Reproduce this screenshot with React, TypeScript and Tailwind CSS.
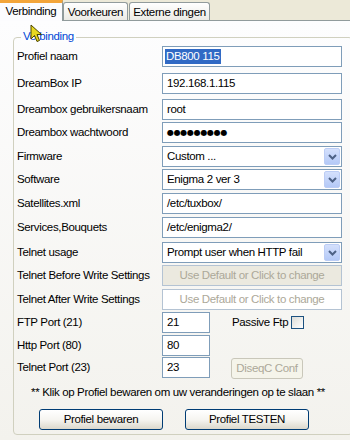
import React from "react";

const Label = ({ children }: { children: React.ReactNode }) => (
  <div className="w-[148px] pl-[3px] whitespace-nowrap">{children}</div>
);

const Input = ({ children, w = "w-[180px]" }: { children?: React.ReactNode; w?: string }) => (
  <div className={`${w} h-full border border-[#7f9db9] bg-white pl-[4px] flex items-center whitespace-nowrap`}>{children}</div>
);

const Select = ({ value }: { value: string }) => (
  <div className="w-[180px] h-full border border-[#7f9db9] bg-white pl-[4px] pr-[1px] flex items-center justify-between">
    <span className="whitespace-nowrap">{value}</span>
    <div className="w-[16px] h-[17px] rounded-[2px] border border-[#bccdf5] bg-gradient-to-b from-[#d4e0fc] to-[#b4c9f7] flex items-center justify-center">
      <svg width="9" height="6" viewBox="0 0 9 6">
        <path d="M1 1 L4.5 4.5 L8 1" stroke="#4d6185" strokeWidth="2" fill="none" />
      </svg>
    </div>
  </div>
);

const GrayField = ({ disabled }: { disabled?: boolean }) => (
  <div
    className={`w-[180px] h-full border border-[#b4c3d3] flex items-center justify-center text-[#aca899] whitespace-nowrap ${
      disabled ? "bg-[#ebe9df]" : "bg-white"
    }`}
  >
    Use Default or Click to change
  </div>
);

const XPButton = ({ children }: { children: React.ReactNode }) => (
  <div className="w-[124px] h-[21px] rounded-[3px] border border-[#003c74] bg-gradient-to-b from-[#ffffff] via-[#f6f5f1] to-[#dcd8cc] flex items-center justify-center whitespace-nowrap">
    {children}
  </div>
);

export default function App() {
  return (
    <div className="w-[350px] h-[440px] bg-[#ece9d8] flex flex-col overflow-hidden relative font-['Liberation_Sans',Arial,sans-serif] text-[11.5px] tracking-[-0.35px] text-black leading-none">
      {/* Tabs */}
      <div className="h-[20px] flex items-end relative z-10">
        <div className="w-[63px] h-[21px] -mb-[1px] bg-[#fcfcfe] border-r border-[#919b9c] border-t-[3px] border-t-[#f3a53a] flex justify-center pt-[3px] whitespace-nowrap">
          <span>Verbinding</span>
        </div>
        <div className="w-[65px] h-[18px] bg-gradient-to-b from-[#ffffff] to-[#ecebe5] border border-b-0 border-[#919b9c] rounded-t-[3px] flex justify-center pt-[4px] whitespace-nowrap">
          <span>Voorkeuren</span>
        </div>
        <div className="w-[81px] h-[18px] ml-[1px] bg-gradient-to-b from-[#ffffff] to-[#ecebe5] border border-b-0 border-[#919b9c] rounded-t-[3px] flex justify-center pt-[4px] whitespace-nowrap">
          <span>Externe dingen</span>
        </div>
      </div>

      {/* Panel */}
      <div className="flex-1 border-t border-[#919b9c] bg-gradient-to-b from-[#fdfdfe] to-[#f3f2ed] pt-[16px] pl-[13px]">
        <div className="relative w-[340px] h-[398px] border border-[#d0d0bf] rounded-[4px] flex flex-col">
          <div className="absolute -top-[7px] left-[7px] px-[2px] bg-[#fdfdfe] text-[#0046d5]">Verbinding</div>

          <div className="flex items-center h-[21px] mt-[8px]">
            <Label>Profiel naam</Label>
            <Input>
              <span className="bg-[#316ac5] text-white px-[1px] -ml-[2px] py-[2px]">DB800 115</span>
            </Input>
          </div>
          <div className="flex items-center h-[21px] mt-[6px]">
            <Label>DreamBox IP</Label>
            <Input>192.168.1.115</Input>
          </div>
          <div className="flex items-center h-[21px] mt-[5px]">
            <Label>Dreambox gebruikersnaam</Label>
            <Input>root</Input>
          </div>
          <div className="flex items-center h-[21px] mt-[2px]">
            <Label>Dreambox wachtwoord</Label>
            <Input>
              <span className="font-['DejaVu_Sans',sans-serif] text-[8px] tracking-[-0.3px]">●●●●●●●●●</span>
            </Input>
          </div>
          <div className="flex items-center h-[21px] mt-[3px]">
            <Label>Firmware</Label>
            <Select value="Custom ..." />
          </div>
          <div className="flex items-center h-[21px] mt-[2px]">
            <Label>Software</Label>
            <Select value="Enigma 2 ver 3" />
          </div>
          <div className="flex items-center h-[21px] mt-[3px]">
            <Label>Satellites.xml</Label>
            <Input>/etc/tuxbox/</Input>
          </div>
          <div className="flex items-center h-[21px] mt-[3px]">
            <Label>Services,Bouquets</Label>
            <Input>/etc/enigma2/</Input>
          </div>
          <div className="flex items-center h-[21px] mt-[4px]">
            <Label>Telnet usage</Label>
            <Select value="Prompt user when HTTP fail" />
          </div>
          <div className="flex items-center h-[21px] mt-[2px]">
            <Label>Telnet Before Write Settings</Label>
            <GrayField disabled />
          </div>
          <div className="flex items-center h-[21px] mt-[3px]">
            <Label>Telnet After Write Settings</Label>
            <GrayField />
          </div>
          <div className="flex items-center h-[21px] mt-[2px]">
            <Label>FTP Port (21)</Label>
            <Input w="w-[48px]">21</Input>
            <span className="ml-[22px] whitespace-nowrap">Passive Ftp</span>
            <div className="ml-[3px] w-[13px] h-[13px] border border-[#1c5180] bg-gradient-to-br from-[#dcdcd7] to-[#ffffff]" />
          </div>
          <div className="flex items-center h-[21px] mt-[2px]">
            <Label>Http Port (80)</Label>
            <Input w="w-[48px]">80</Input>
          </div>
          <div className="flex items-center h-[21px] mt-[1px]">
            <Label>Telnet Port (23)</Label>
            <Input w="w-[48px]">23</Input>
            <div className="ml-[21px] mt-[2px] w-[72px] h-[21px] rounded-[3px] border border-[#c9c7ba] bg-[#f5f4ea] text-[#aca899] flex items-center justify-center whitespace-nowrap">
              DiseqC Conf
            </div>
          </div>

          <div className="mt-[8px] h-[14px] flex items-center justify-center pr-[10px] whitespace-nowrap">
            ** Klik op Profiel bewaren om uw veranderingen op te slaan **
          </div>

          <div className="flex mt-[9px] pl-[25px] gap-[22px]">
            <XPButton>Profiel bewaren</XPButton>
            <XPButton>Profiel TESTEN</XPButton>
          </div>
        </div>
      </div>

      {/* mouse cursor */}
      <svg className="absolute left-[30px] top-[24px]" width="13" height="19" viewBox="0 0 13 19">
        <path d="M1 1 L1 15 L4.5 11.5 L7 17.5 L9.5 16.5 L7 10.5 L11.5 10.5 Z" fill="#e8d820" stroke="#4a4400" strokeWidth="1" />
      </svg>
    </div>
  );
}
